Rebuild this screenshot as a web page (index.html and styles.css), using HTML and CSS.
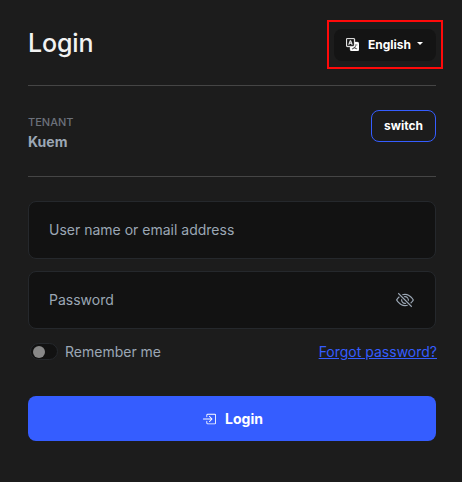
FILE: index.html
```html
<!DOCTYPE html>
<html lang="en">
<head>
<meta charset="utf-8">
<title>Login</title>
<link rel="stylesheet" href="styles.css">
</head>
<body>
<main class="card">
  <header class="head">
    <h1 class="title">Login</h1>
    <div class="language">
      <button class="language-btn" type="button">
        <svg class="translate" viewBox="0 0 16 16" fill="currentColor"><path d="M4.545 6.714 4.11 8H3l1.862-5h1.284L8 8H6.833l-.435-1.286zm1.634-.736L5.5 3.956h-.049l-.679 2.022z"/><path d="M0 2a2 2 0 0 1 2-2h7a2 2 0 0 1 2 2v3h3a2 2 0 0 1 2 2v7a2 2 0 0 1-2 2H7a2 2 0 0 1-2-2v-3H2a2 2 0 0 1-2-2zm2-1a1 1 0 0 0-1 1v7a1 1 0 0 0 1 1h7a1 1 0 0 0 1-1V2a1 1 0 0 0-1-1zm7.138 9.995q.289.451.63.846c-.748.575-1.673 1.001-2.768 1.292.178.217.451.635.555.867 1.125-.359 2.08-.844 2.886-1.494.777.665 1.739 1.165 2.93 1.472.133-.254.414-.673.629-.89-1.125-.253-2.057-.694-2.82-1.284.681-.747 1.222-1.651 1.621-2.757H14V8h-3v1.047h.765c-.318.844-.74 1.546-1.272 2.13a6 6 0 0 1-.415-.492 2 2 0 0 1-.94.31"/></svg>
        <span>English</span>
        <span class="caret"></span>
      </button>
      <span class="highlight"></span>
    </div>
  </header>
  <section class="tenant">
    <div>
      <div class="tenant-label">TENANT</div>
      <div class="tenant-name">Kuem</div>
    </div>
    <button class="switch-btn" type="button">switch</button>
  </section>
  <form class="form">
    <div class="field">User name or email address</div>
    <div class="field">
      <span>Password</span>
      <svg class="eye" viewBox="0 0 16 16" fill="currentColor"><path d="M13.359 11.238C15.06 9.72 16 8 16 8s-3-5.500-8-5.500a7 7 0 0 0-2.790.588l.770.771A6 6 0 0 1 8 3.500c2.120 0 3.879 1.168 5.168 2.457A13 13 0 0 1 14.828 8q-.086.130-.195.288c-.335.480-.830 1.120-1.465 1.755q-.247.248-.517.486z"/><path d="M11.297 9.176a3.500 3.500 0 0 0-4.474-4.474l.823.823a2.500 2.500 0 0 1 2.829 2.829zm-2.943 1.299.822.822a3.500 3.500 0 0 1-4.474-4.474l.823.823a2.500 2.500 0 0 0 2.829 2.829"/><path d="M3.350 5.470q-.270.240-.518.487A13 13 0 0 0 1.172 8l.195.288c.335.480.830 1.120 1.465 1.755C4.121 11.332 5.881 12.500 8 12.500c.716 0 1.390-.133 2.020-.360l.770.772A7 7 0 0 1 8 13.500C3 13.500 0 8 0 8s.939-1.721 2.641-3.238l.708.709zm10.296 8.884-12-12 .708-.708 12 12z"/></svg>
    </div>
    <div class="options">
      <label class="remember"><span class="toggle"><span class="knob"></span></span><span>Remember me</span></label>
      <a class="forgot" href="#">Forgot password?</a>
    </div>
    <button class="login-btn" type="button">
      <svg class="enter" viewBox="0 0 16 16" fill="currentColor"><path fill-rule="evenodd" d="M6 3.500a.5.5 0 0 1 .5-.5h8a.5.5 0 0 1 .5.5v9a.5.5 0 0 1-.5.5h-8a.5.5 0 0 1-.5-.5v-2a.5.5 0 0 0-1 0v2A1.500 1.500 0 0 0 6.500 14h8a1.500 1.500 0 0 0 1.500-1.500v-9A1.500 1.500 0 0 0 14.500 2h-8A1.500 1.500 0 0 0 5 3.500v2a.5.5 0 0 0 1 0z"/><path fill-rule="evenodd" d="M11.854 8.354a.5.5 0 0 0 0-.708l-3-3a.5.5 0 1 0-.708.708L10.293 7.500H1.500a.5.5 0 0 0 0 1h8.793l-2.147 2.146a.5.5 0 0 0 .708.708z"/></svg>
      <span>Login</span>
    </button>
  </form>
</main>
</body>
</html>
```
FILE: styles.css
```css
* { box-sizing: border-box; }
body {
  margin: 0;
  min-height: 482px;
  background: #1c1c1c;
  color: #9ba7b5;
  font: 400 14px/21px Inter, sans-serif;
}
button { font: inherit; cursor: pointer; }
.card { padding: 0 26px 0 28px; }
.head {
  display: flex;
  justify-content: space-between;
  align-items: center;
  height: 86px;
  border-bottom: 1px solid #454545;
}
.title { margin: 0; color: #f2f2f2; font-size: 25px; font-weight: 500; line-height: 30px; letter-spacing: -0.15px; }
.language { position: relative; margin-top: 5px; }
.language-btn {
  display: flex;
  align-items: center;
  width: 102px;
  height: 32px;
  padding: 0 12px 2px;
  border: 0;
  border-radius: 8px;
  background: #141414;
  color: #fff;
  font-size: 12px;
  font-weight: 700;
}
.translate { width: 13px; height: 13px; margin-right: 9px; stroke: currentColor; stroke-width: 0.4; }
.caret { margin: 0 0 1px 6px; border: 3px solid transparent; border-top-color: #fff; border-bottom: 0; }
.highlight { position: absolute; inset: -9px -7px -8px; border: 2px solid #ff0a0a; pointer-events: none; }
.tenant {
  display: flex;
  justify-content: space-between;
  align-items: flex-start;
  height: 91px;
  padding-top: 24px;
  border-bottom: 1px solid #454545;
}
.tenant-label { margin-top: 3px; color: #6c717b; font-size: 11px; font-weight: 500; line-height: 18px; }
.tenant-name { font-weight: 700; }
.switch-btn {
  width: 65px;
  height: 32px;
  padding: 0 0 2px;
  border: 1px solid #355dff;
  border-radius: 8px;
  background: transparent;
  color: #fff;
  font-size: 12px;
  font-weight: 700;
}
.form { padding-top: 24px; }
.field {
  display: flex;
  justify-content: space-between;
  align-items: center;
  height: 58px;
  margin-bottom: 12px;
  padding: 0 20px 2px;
  border: 1px solid #25282c;
  border-radius: 8px;
  background: #121212;
}
.eye { width: 18px; height: 18px; margin: 1px 1px 0 0; }
.options { display: flex; justify-content: space-between; align-items: center; height: 21px; }
.remember { display: flex; align-items: center; gap: 7px; }
.toggle {
  display: flex;
  align-items: center;
  width: 28px;
  height: 17px;
  margin-left: 2px;
  padding-left: 2px;
  border: 1px solid #25282c;
  border-radius: 9px;
  background: #121212;
}
.knob { width: 12px; height: 12px; border-radius: 50%; background: #888; }
.forgot { margin-right: -1px; color: #355dff; }
.login-btn {
  display: flex;
  justify-content: center;
  align-items: center;
  gap: 9px;
  width: 100%;
  height: 45px;
  margin-top: 34px;
  padding: 0 0 0 1px;
  border: 0;
  border-radius: 8px;
  background: #355dff;
  color: #fff;
  font-weight: 700;
}
.enter { width: 14px; height: 14px; }
```
